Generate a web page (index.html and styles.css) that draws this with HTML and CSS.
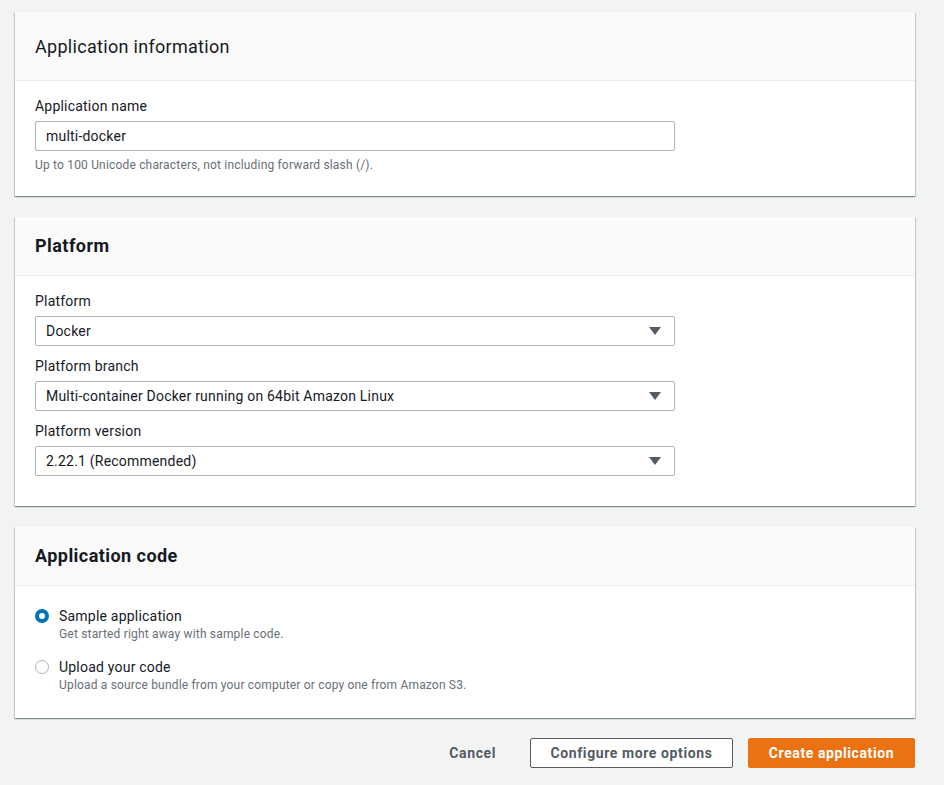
FILE: index.html
```html
<!DOCTYPE html>
<html lang="en">
<head>
<meta charset="utf-8">
<title>Create application</title>
<link rel="stylesheet" href="styles.css">
</head>
<body>
<main class="page">
  <section class="card">
    <header class="card-header card-header--tall">
      <h2 class="card-title card-title--regular">Application information</h2>
    </header>
    <div class="card-body card-body--info">
      <div class="field-label">Application name</div>
      <div class="input">multi-docker</div>
      <p class="field-hint">Up to 100 Unicode characters, not including forward slash (/).</p>
    </div>
  </section>

  <section class="card">
    <header class="card-header">
      <h2 class="card-title">Platform</h2>
    </header>
    <div class="card-body card-body--platform">
      <div class="field">
        <div class="field-label">Platform</div>
        <div class="select"><span>Docker</span><svg class="caret" width="12" height="8" viewBox="0 0 12 8"><path d="M0 0h12L6 8z" fill="#545b64"/></svg></div>
      </div>
      <div class="field">
        <div class="field-label">Platform branch</div>
        <div class="select"><span>Multi-container Docker running on 64bit Amazon Linux</span><svg class="caret" width="12" height="8" viewBox="0 0 12 8"><path d="M0 0h12L6 8z" fill="#545b64"/></svg></div>
      </div>
      <div class="field">
        <div class="field-label">Platform version</div>
        <div class="select"><span>2.22.1 (Recommended)</span><svg class="caret" width="12" height="8" viewBox="0 0 12 8"><path d="M0 0h12L6 8z" fill="#545b64"/></svg></div>
      </div>
    </div>
  </section>

  <section class="card">
    <header class="card-header">
      <h2 class="card-title">Application code</h2>
    </header>
    <div class="card-body card-body--code">
      <div class="radio-row">
        <span class="radio radio--checked"></span>
        <div class="radio-text">
          <div class="radio-label">Sample application</div>
          <div class="radio-desc">Get started right away with sample code.</div>
        </div>
      </div>
      <div class="radio-row">
        <span class="radio"></span>
        <div class="radio-text">
          <div class="radio-label">Upload your code</div>
          <div class="radio-desc">Upload a source bundle from your computer or copy one from Amazon S3.</div>
        </div>
      </div>
    </div>
  </section>

  <div class="actions">
    <button class="btn btn--link">Cancel</button>
    <button class="btn btn--normal">Configure more options</button>
    <button class="btn btn--primary">Create application</button>
  </div>
</main>
</body>
</html>
```

FILE: styles.css
```css
* { box-sizing: border-box; letter-spacing: 0.015em; }

html, body {
  margin: 0;
  padding: 0;
  background: #f2f3f3;
  font-family: Roboto, "Liberation Sans", Arial, sans-serif;
  color: #16191f;
  font-size: 14px;
}

.page {
  width: 900px;
  margin-left: 15px;
  padding-top: 12px;
  display: flex;
  flex-direction: column;
  gap: 21px;
}

.card {
  background: #fff;
  box-shadow: 0 1px 1px 0 rgba(0, 28, 36, 0.3), 1px 1px 1px 0 rgba(0, 28, 36, 0.15), -1px 1px 1px 0 rgba(0, 28, 36, 0.15);
}

.card-header {
  background: #fafafa;
  border-bottom: 1px solid #eaeded;
  padding: 18px 20px 18px;
}

.card-header--tall {
  padding: 24px 20px 22px;
}

.card-title {
  margin: 0;
  font-size: 18px;
  line-height: 22px;
  font-weight: 700;
  color: #16191f;
  letter-spacing: 0.45px;
}

.card-title--regular {
  font-weight: 400;
  letter-spacing: 0.3px;
}

.card-body--info { padding: 14px 20px 23px; }

.card-body--platform {
  padding: 14px 20px 30px;
  display: flex;
  flex-direction: column;
  gap: 9px;
}

.card-body--code {
  padding: 20px 20px 25px;
  display: flex;
  flex-direction: column;
  gap: 15px;
}

.field-label {
  font-size: 14px;
  line-height: 22px;
  margin-bottom: 4px;
  color: #16191f;
}

.input, .select {
  width: 640px;
  height: 30px;
  border: 1px solid #aab7b8;
  border-radius: 2px;
  padding: 0 10px;
  font-size: 14px;
  line-height: 28px;
  color: #16191f;
  background: #fff;
}

.select {
  display: flex;
  align-items: center;
  justify-content: space-between;
  padding-right: 13px;
}

.caret { display: block; }

.field-hint {
  margin: 6px 0 0;
  font-size: 12px;
  line-height: 16px;
  color: #687078;
}

.radio-row {
  display: flex;
  align-items: flex-start;
  gap: 10px;
}

.radio {
  flex: none;
  width: 14px;
  height: 14px;
  margin-top: 3px;
  border-radius: 50%;
  border: 1px solid #aab7b8;
  background: #fff;
}

.radio--checked {
  border: 4px solid #0073bb;
}

.radio-label {
  font-size: 14px;
  line-height: 20px;
}

.radio-desc {
  font-size: 12px;
  line-height: 16px;
  color: #687078;
}

.actions {
  display: flex;
  justify-content: flex-end;
  gap: 15px;
  margin-top: -1px;
}

.btn {
  height: 30px;
  border-radius: 2px;
  font-family: inherit;
  font-size: 14px;
  font-weight: 700;
  letter-spacing: 0.6px;
  white-space: nowrap;
  padding: 0;
  cursor: pointer;
}

.btn--link {
  background: transparent;
  border: 1px solid transparent;
  color: #545b64;
  padding: 0 18px 0 22px;
}

.btn--normal {
  background: #fff;
  border: 1px solid #545b64;
  color: #545b64;
  width: 203px;
}

.btn--primary {
  background: #ec7211;
  border: 1px solid #ec7211;
  color: #fff;
  width: 167px;
}
```
